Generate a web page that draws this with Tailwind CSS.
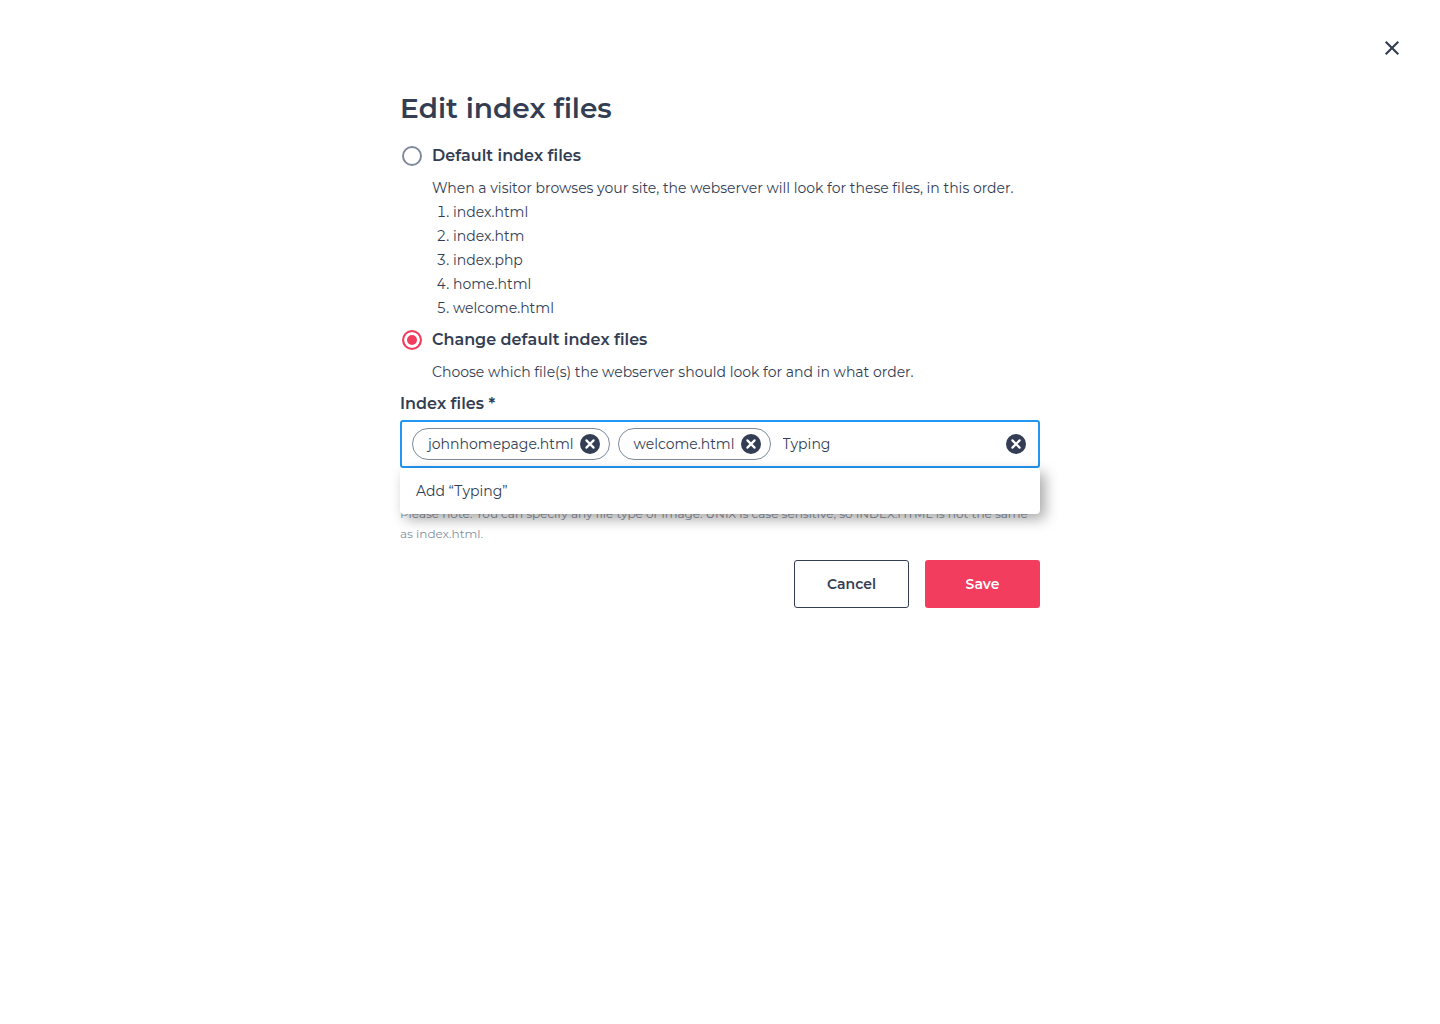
<!DOCTYPE html>
<html lang="en">
<head>
<meta charset="utf-8">
<meta name="viewport" content="width=device-width, initial-scale=1">
<title>Edit index files</title>
<script src="https://cdn.jsdelivr.net/npm/@tailwindcss/browser@4"></script>
</head>
<body class="min-h-screen bg-white font-['Montserrat','Inter',sans-serif] text-sm leading-6 text-[#333d53] antialiased">
<svg class="hidden" aria-hidden="true">
  <symbol id="clear" viewBox="0 0 20 20">
    <circle cx="10" cy="10" r="10" fill="#333d53"/>
    <path d="M6.4 6.4l7.2 7.2M13.6 6.4l-7.2 7.2" stroke="#fff" stroke-width="2.2" stroke-linecap="round"/>
  </symbol>
</svg>
<header class="flex justify-end px-9 pt-9">
  <button type="button" aria-label="Close" class="size-6">
    <svg class="size-6" viewBox="0 0 24 24" fill="none" stroke="#333d53" stroke-width="2.1"><path d="M5.7 5.7l12.6 12.6M18.3 5.7L5.7 18.3"/></svg>
  </button>
</header>
<main class="mx-auto mt-7 max-w-[640px]">
  <h1 class="text-[28px] leading-10 font-semibold [font-kerning:none]">Edit index files</h1>
  <form class="mt-4">
    <div class="flex items-center gap-2.5 pl-0.5">
      <input id="default" type="radio" name="mode" class="size-5 appearance-none rounded-full border-2 border-[#7f899c]">
      <label for="default" class="text-base font-semibold [font-kerning:none]">Default index files</label>
    </div>
    <div class="mt-2 pl-8">
      <p>When a visitor browses your site, the webserver will look for these files, in this order.</p>
      <ol class="list-decimal pl-[21px]">
        <li>index.html</li>
        <li>index.htm</li>
        <li>index.php</li>
        <li>home.html</li>
        <li>welcome.html</li>
      </ol>
    </div>
    <div class="mt-2 flex items-center gap-2.5 pl-0.5">
      <input id="custom" type="radio" name="mode" checked class="size-5 appearance-none rounded-full border-2 border-[#f33d5f] bg-[#f33d5f] shadow-[inset_0_0_0_3px_#fff]">
      <label for="custom" class="text-base font-semibold [font-kerning:none]">Change default index files</label>
    </div>
    <p class="mt-2 pl-8">Choose which file(s) the webserver should look for and in what order.</p>

    <label for="files" class="mt-2 block text-base font-semibold [font-kerning:none]">Index files *</label>
    <div class="relative mt-1">
      <div class="flex h-12 items-center gap-2 rounded-[3px] border-2 border-[#2196f3] pr-3 pl-2.5">
        <span class="flex h-8 items-center gap-1.5 rounded-full border border-[#7f899c] pr-[9px] pl-[15px]">johnhomepage.html
          <button type="button" aria-label="Remove johnhomepage.html" class="size-5"><svg class="size-5"><use href="#clear"/></svg></button>
        </span>
        <span class="flex h-8 items-center gap-1.5 rounded-full border border-[#7f899c] pr-[9px] pl-[15px]">welcome.html
          <button type="button" aria-label="Remove welcome.html" class="size-5"><svg class="size-5"><use href="#clear"/></svg></button>
        </span>
        <input id="files" type="text" value="Typing" class="min-w-0 flex-1 pl-1 outline-none">
        <button type="button" aria-label="Clear all" class="size-5"><svg class="size-5"><use href="#clear"/></svg></button>
      </div>
      <div class="absolute inset-x-0 top-full rounded bg-white shadow-[5px_5px_14px_rgba(0,0,0,0.35)]">
        <button type="button" class="block h-[46px] w-full px-4 text-left">Add “Typing”</button>
      </div>
    </div>
    <p class="mt-9 text-xs leading-5 text-[#8790a2]">Please note: You can specify any file type or image. UNIX is case sensitive, so INDEX.HTML is not the same as index.html.</p>
    <div class="mt-4 flex justify-end gap-4">
      <button type="button" class="h-12 w-[115px] rounded-[3px] border border-[#333d53] font-semibold">Cancel</button>
      <button type="submit" class="h-12 w-[115px] rounded-[3px] bg-[#f33d5f] font-semibold text-white">Save</button>
    </div>
  </form>
</main>
</body>
</html>
